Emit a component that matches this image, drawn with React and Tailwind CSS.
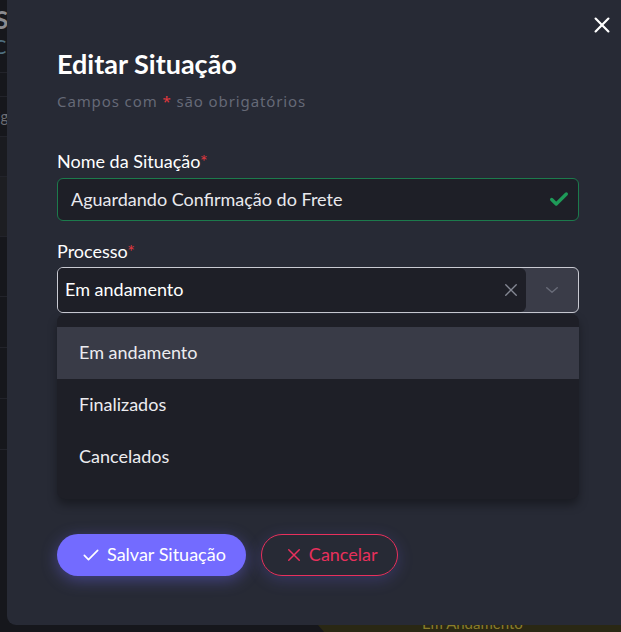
import { useState } from 'react';

const options = ['Em andamento', 'Finalizados', 'Cancelados'];

function CheckIcon({ className }) {
  return (
    <svg viewBox="0 0 24 24" className={className} fill="none" stroke="currentColor" strokeLinecap="round" strokeLinejoin="round">
      <path d="M4 12.5l5 5L20 6.5" />
    </svg>
  );
}

function XIcon({ className }) {
  return (
    <svg viewBox="0 0 24 24" className={className} fill="none" stroke="currentColor" strokeLinecap="round">
      <path d="M5 5l14 14M19 5L5 19" />
    </svg>
  );
}

export default function App() {
  const [value] = useState('Em andamento');

  return (
    <div className="relative w-[621px] h-[632px] overflow-hidden bg-[#16171c] font-['Lato',sans-serif]">
      {/* page behind the modal */}
      <div className="flex flex-col">
        <div className="h-[32px] pt-[8px] text-[24px] font-bold text-[#8a8b90] leading-none -ml-[5px]">S</div>
        <div className="h-[40px] text-[20px] text-[#4f6f80] leading-none -ml-[7px] pt-[4px]">C</div>
        <div className="h-[24px] border-t border-[#22232a]" />
        <div className="h-[40px] border-t border-[#22232a] text-[15px] text-[#6d6e74] -ml-[3px] pt-[8px]">ig</div>
        <div className="h-[40px] border-t border-[#22232a] bg-[#1a1b20]" />
        <div className="h-[60px] border-t border-[#22232a] bg-[#1d1e22]" />
        <div className="h-[60px] border-t border-[#22232a]" />
        <div className="h-[51px] border-t border-[#22232a]" />
        <div className="h-[51px] border-t border-[#22232a]" />
        <div className="h-[51px] border-t border-[#22232a]" />
        <div className="h-[58px] border-t border-[#22232a]" />
      </div>
      <div className="absolute left-[318px] bottom-0 w-[310px] h-[7px] bg-[#2a2814] [clip-path:polygon(0_0,100%_0,100%_100%,6px_100%)]">
        <div className="ml-[104px] -mt-[9px] text-[15px] text-[#8a7d2a] leading-none">Em Andamento</div>
      </div>

      {/* modal */}
      <div className="absolute left-[7px] -top-[20px] w-[640px] h-[645px] rounded-[9px] bg-[#272a35]">
        <button className="absolute right-[34px] top-[34px] text-white">
          <XIcon className="w-[22px] h-[22px] stroke-[2.4]" />
        </button>

        <div className="pl-[50px] pr-[68px] pt-[67px]">
          <h2 className="text-[27px] font-bold text-white leading-[34px]">Editar Situação</h2>
          <p className="mt-[9px] text-[15px] tracking-[0.9px] text-[#656977] font-['Noto_Sans',sans-serif]">
            Campos com <span className="text-[#e0383e]">*</span> são obrigatórios
          </p>

          <div className="mt-[36px]">
            <label className="block text-[18px] leading-[24px] text-white">
              Nome da Situação<span className="text-[#e0383e]">*</span>
            </label>
            <div className="mt-[5px] flex items-center h-[43px] rounded-[6px] border border-[#1c7a4c] bg-[#1e1f27] pl-[13px] pr-[8px]">
              <span className="flex-1 text-[18px] text-[#e9e9ee]">Aguardando Confirmação do Frete</span>
              <CheckIcon className="w-[22px] h-[22px] text-[#1e9a58] stroke-[3.6]" />
            </div>
          </div>

          <div className="mt-[18px]">
            <label className="block text-[18px] leading-[24px] text-white">
              Processo<span className="text-[#e0383e]">*</span>
            </label>
            <div className="relative mt-[4px]">
              <div className="flex h-[46px] rounded-[6px] border border-[#c9cad2] bg-[#3a3c48] overflow-hidden">
                <div className="flex flex-1 items-center rounded-r-[6px] bg-[#1e1f27] pl-[7px] pr-[6px]">
                  <span className="flex-1 text-[18px] text-white">{value}</span>
                  <XIcon className="w-[18px] h-[18px] text-[#858894] stroke-[1.8]" />
                </div>
                <div className="flex w-[52px] items-center justify-center">
                  <svg viewBox="0 0 24 24" className="w-[18px] h-[18px] text-[#686b78]" fill="none" stroke="currentColor" strokeWidth="2" strokeLinecap="round" strokeLinejoin="round">
                    <path d="M5 9l7 6 7-6" />
                  </svg>
                </div>
              </div>

              {/* open menu */}
              <ul className="absolute left-0 right-0 top-[47px] z-10 rounded-[8px] bg-[#1e1f27] pt-[13px] pb-[16px] shadow-[0_6px_10px_rgba(0,0,0,0.35)]">
                {options.map((opt) => (
                  <li
                    key={opt}
                    className={[
                      'flex items-center h-[52px] pl-[22px] text-[18px] text-[#ececf0]',
                      opt === value ? 'bg-[#393b47]' : '',
                    ].join(' ')}
                  >
                    {opt}
                  </li>
                ))}
              </ul>
            </div>
          </div>

          {/* fields hidden behind the menu */}
          <div className="h-[221px] pt-[30px]">
            <div className="text-[17px] text-[#ececf0]">Descrição</div>
          </div>

          <div className="flex gap-[15px]">
            <button className="flex items-center gap-[6px] h-[42px] rounded-full bg-[#736bff] pl-[24px] pr-[20px] text-[18px] text-white shadow-[0_4px_16px_rgba(115,107,255,0.4)]">
              <CheckIcon className="w-[20px] h-[20px] stroke-[2]" />
              Salvar Situação
            </button>
            <button className="flex items-center gap-[6px] h-[42px] rounded-full border border-[#e8305c] pl-[23px] pr-[19px] text-[18px] text-[#e8305c] shadow-[0_4px_16px_rgba(115,107,255,0.22)]">
              <XIcon className="w-[18px] h-[18px] stroke-[2]" />
              Cancelar
            </button>
          </div>
        </div>
      </div>
    </div>
  );
}
